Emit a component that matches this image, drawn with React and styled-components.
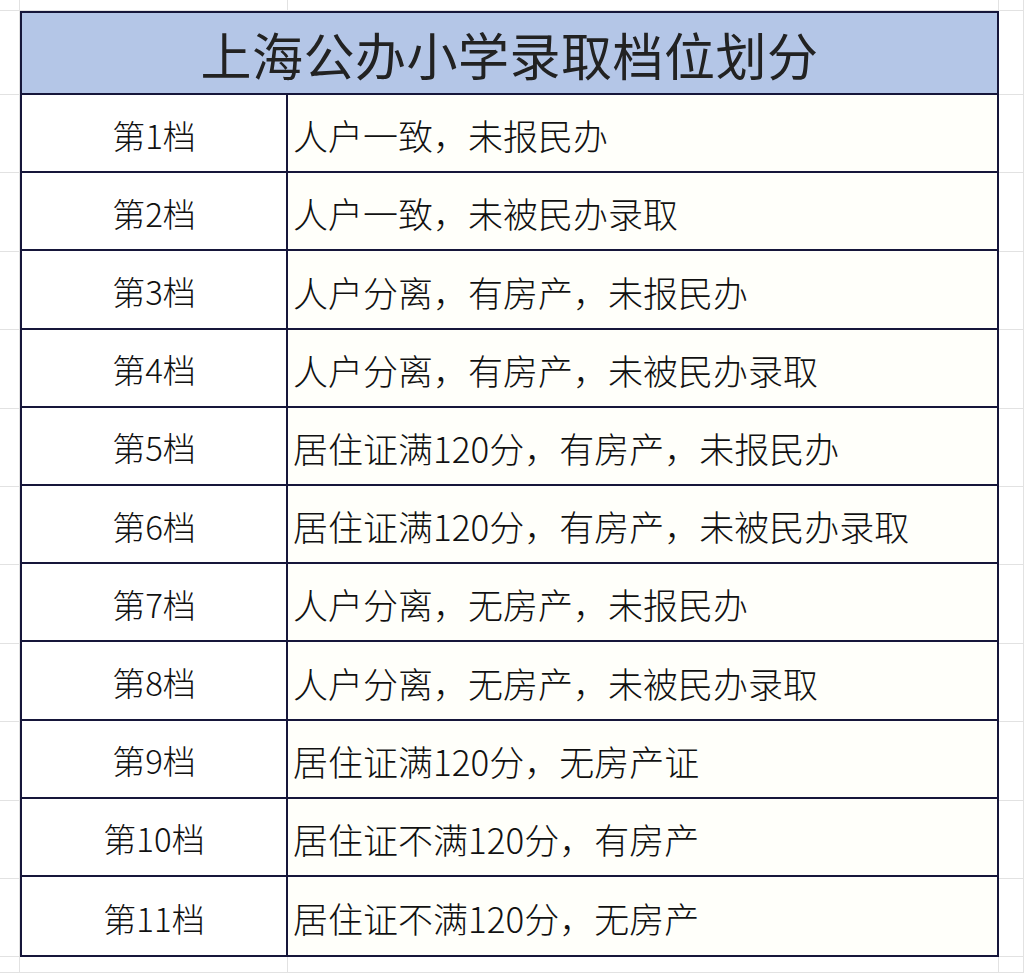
import React from 'react';
import styled, { createGlobalStyle } from 'styled-components';

const rows = [
	['第1档', '人户一致，未报民办'],
	['第2档', '人户一致，未被民办录取'],
	['第3档', '人户分离，有房产，未报民办'],
	['第4档', '人户分离，有房产，未被民办录取'],
	['第5档', '居住证满120分，有房产，未报民办'],
	['第6档', '居住证满120分，有房产，未被民办录取'],
	['第7档', '人户分离，无房产，未报民办'],
	['第8档', '人户分离，无房产，未被民办录取'],
	['第9档', '居住证满120分，无房产证'],
	['第10档', '居住证不满120分，有房产'],
	['第11档', '居住证不满120分，无房产']
];

const GlobalStyle = createGlobalStyle`
	html, body {
		margin: 0;
		padding: 0;
		background: #ffffff;
	}
	body {
		font-family: 'Noto Sans CJK SC', 'Noto Sans', sans-serif;
		color: #111;
	}
`;

const App = () => {
	return (
		<>
			<GlobalStyle />
			<Sheet>
				{/* empty spreadsheet cells above the table */}
				<GridCell />
				<GridCell />
				<GridCell />
				<GridCell />

				<Table>
					<Title>上海公办小学录取档位划分</Title>
					{rows.map(([level, desc], i) => (
						<React.Fragment key={level}>
							<LevelCell last={i === rows.length - 1}>{level}</LevelCell>
							<DescCell last={i === rows.length - 1}>{desc}</DescCell>
						</React.Fragment>
					))}
				</Table>

				{/* margin cells left and right of the table */}
				{Array.from({ length: 12 }).map((_, i) => (
					<React.Fragment key={i}>
						<GridCell col={1} row={i + 2} />
						<GridCell col={4} row={i + 2} />
					</React.Fragment>
				))}

				{/* empty cells below */}
				<GridCell col={1} row={14} />
				<GridCell col={2} row={14} />
				<GridCell col={3} row={14} />
				<GridCell col={4} row={14} />
			</Sheet>
		</>
	);
};

export default App;

const Sheet = styled.div`
	display: grid;
	grid-template-columns: 20px 268px 711px 1fr;
	grid-template-rows: 11px 84px repeat(11, 78.4px) 1fr;
	width: 1024px;
	height: 973px;
	overflow: hidden;
`;

const GridCell = styled.div`
	box-sizing: border-box;
	border-right: 1px solid #e2e2e2;
	border-bottom: 1px solid #e2e2e2;
	${p => p.col && `grid-column: ${p.col};`}
	${p => p.row && `grid-row: ${p.row};`}
`;

const Table = styled.div`
	grid-column: 2 / 4;
	grid-row: 2 / 14;
	box-sizing: border-box;
	border: 2px solid #16163a;
	display: grid;
	grid-template-columns: 266px 1fr;
	grid-template-rows: 82px repeat(11, 1fr);
`;

const Title = styled.div`
	grid-column: 1 / 3;
	box-sizing: border-box;
	background: #b4c6e7;
	border-bottom: 2px solid #16163a;
	display: flex;
	align-items: center;
	justify-content: center;
	font-size: 51px;
	font-weight: 400;
	color: #222;
	letter-spacing: 0.5px;
	padding-top: 2px;
`;

const LevelCell = styled.div`
	box-sizing: border-box;
	background: #ffffff;
	border-right: 2px solid #16163a;
	border-bottom: ${p => (p.last ? 'none' : '2px solid #16163a')};
	display: flex;
	align-items: center;
	justify-content: center;
	font-size: 33px;
	font-weight: 300;
	padding-top: 3px;
`;

const DescCell = styled.div`
	box-sizing: border-box;
	background: #fffffa;
	border-bottom: ${p => (p.last ? 'none' : '2px solid #16163a')};
	display: flex;
	align-items: center;
	padding: 3px 0 0 5px;
	font-size: 35px;
	font-weight: 300;
	white-space: nowrap;
`;
